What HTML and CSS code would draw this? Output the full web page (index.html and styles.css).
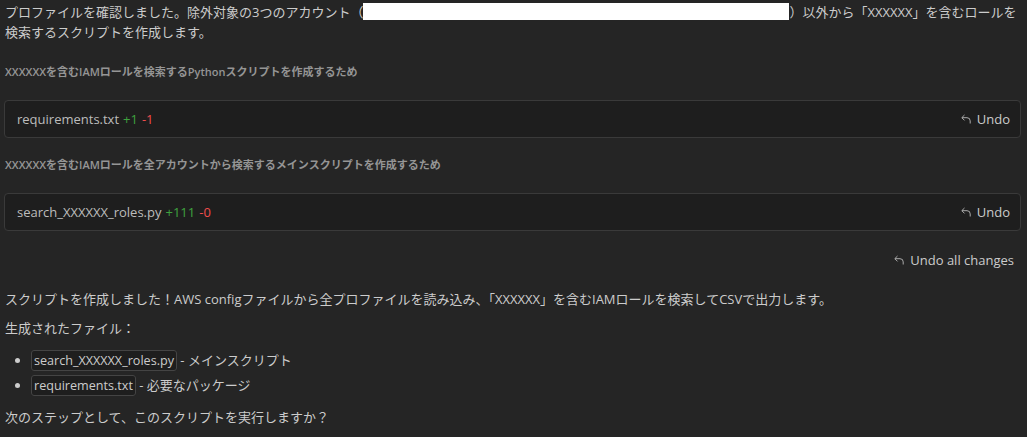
FILE: index.html
```html
<!DOCTYPE html>
<html lang="ja">
<head>
<meta charset="utf-8">
<title>Chat</title>
<link rel="stylesheet" href="styles.css">
</head>
<body>
<div class="chat">
  <p class="msg intro">プロファイルを確認しました。除外対象の3つのアカウント（<span class="redact"></span>）以外から「XXXXXX」を含むロールを検索するスクリプトを作成します。</p>

  <div class="step">
    <div class="reason">XXXXXXを含むIAMロールを検索するPythonスクリプトを作成するため</div>
    <div class="edit">
      <span class="file">requirements.txt</span>
      <span class="add">+1</span>
      <span class="del">-1</span>
      <button class="undo"><svg viewBox="0 0 12 12" width="12" height="12"><path d="M4.5 2 L1.8 4.7 L4.5 7.4 M2 4.7 H7 A3.2 3.2 0 0 1 10.2 7.9 V10.5" fill="none" stroke="currentColor" stroke-width="1"/></svg>Undo</button>
    </div>
  </div>

  <div class="step">
    <div class="reason">XXXXXXを含むIAMロールを全アカウントから検索するメインスクリプトを作成するため</div>
    <div class="edit">
      <span class="file">search_XXXXXX_roles.py</span>
      <span class="add">+111</span>
      <span class="del">-0</span>
      <button class="undo"><svg viewBox="0 0 12 12" width="12" height="12"><path d="M4.5 2 L1.8 4.7 L4.5 7.4 M2 4.7 H7 A3.2 3.2 0 0 1 10.2 7.9 V10.5" fill="none" stroke="currentColor" stroke-width="1"/></svg>Undo</button>
    </div>
  </div>

  <div class="undo-all-row">
    <button class="undo"><svg viewBox="0 0 12 12" width="12" height="12"><path d="M4.5 2 L1.8 4.7 L4.5 7.4 M2 4.7 H7 A3.2 3.2 0 0 1 10.2 7.9 V10.5" fill="none" stroke="currentColor" stroke-width="1"/></svg>Undo all changes</button>
  </div>

  <p class="msg">スクリプトを作成しました！AWS configファイルから全プロファイルを読み込み、「XXXXXX」を含むIAMロールを検索してCSVで出力します。</p>
  <p class="msg">生成されたファイル：</p>
  <ul class="files">
    <li><code>search_XXXXXX_roles.py</code> - メインスクリプト</li>
    <li><code>requirements.txt</code> - 必要なパッケージ</li>
  </ul>
  <p class="msg">次のステップとして、このスクリプトを実行しますか？</p>
</div>
</body>
</html>
```

FILE: styles.css
```css
html, body {
  margin: 0;
  padding: 0;
  background: #252525;
}

body {
  font-family: "Open Sans", "Noto Sans CJK JP", sans-serif;
  font-size: 13px;
  color: #cccccc;
}

.chat {
  padding: 2px 6px 0 5px;
  display: flex;
  flex-direction: column;
}

.msg {
  margin: 0;
  line-height: 20px;
}

.intro {
  margin-bottom: 22px;
}

/* blanked-out account list */
.redact {
  display: inline-block;
  width: 426px;
  height: 17px;
  background: #ffffff;
  vertical-align: -3px;
}

.step {
  display: flex;
  flex-direction: column;
  margin-bottom: 19px;
}

.reason {
  font-size: 11px;
  font-weight: 600;
  color: #959595;
  line-height: 16px;
  margin-bottom: 20px;
}

.edit {
  display: flex;
  align-items: center;
  gap: 4px;
  height: 36px;
  margin-left: -1px;
  padding: 0 10px 0 12px;
  background: #1e1e1e;
  border: 1px solid #3a3a3a;
  border-radius: 4px;
}

.file {
  color: #bcbcbc;
}

.add {
  color: #3fa23f;
}

.del {
  color: #f14c4c;
}

.undo {
  margin-left: auto;
  display: inline-flex;
  align-items: center;
  gap: 5px;
  background: none;
  border: 0;
  padding: 0;
  font: inherit;
  color: #cccccc;
}

.undo svg {
  color: #aaaaaa;
}

.undo-all-row {
  display: flex;
  justify-content: flex-end;
  padding-right: 7px;
  margin-bottom: 19px;
  line-height: 20px;
}

.msg + .msg {
  margin-top: 9px;
}

.files {
  margin: 10px 0 9px;
  padding-left: 26px;
}

.files li {
  line-height: 25px;
}

code {
  font-family: inherit;
  font-size: 12.6px;
  color: #cccccc;
  background: #1e1e1e;
  border: 1px solid #444444;
  border-radius: 3px;
  padding: 1px 2px;
}
```
